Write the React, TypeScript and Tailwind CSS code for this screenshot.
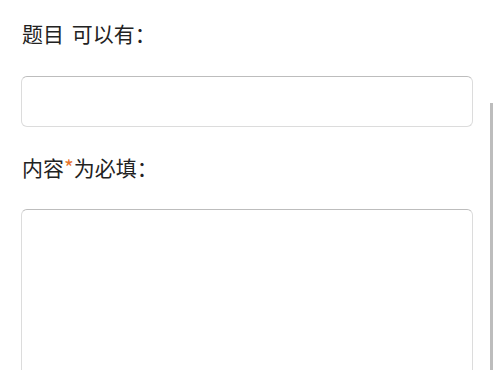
import React from "react";

export default function App() {
  return (
    <div
      className="relative h-[370px] w-[495px] overflow-hidden bg-white"
      style={{ fontFamily: '"Noto Sans CJK SC", "Noto Sans", sans-serif' }}
    >
      <div className="flex flex-col pl-[21px] pr-[22px] pt-[18px]">
        <label className="h-[30px] pl-[1px] text-[21px] leading-[30px] text-[#222] [word-spacing:3px]">题目 可以有：</label>
        <input
          type="text"
          className="mt-[28px] h-[51px] w-full rounded-[6px] border border-[#dcdcdc] border-t-[#bdbdbd] bg-white outline-none"
        />
        <label className="mt-[25px] h-[30px] pl-[1px] text-[21px] leading-[30px] text-[#222]">
          内容<span className="text-[#e8742c]">*</span>为必填：
        </label>
        <textarea className="mt-[27px] h-[200px] w-full resize-none rounded-[6px] border border-[#dcdcdc] border-t-[#bdbdbd] bg-white outline-none" />
      </div>
      <div className="absolute left-[490px] top-[103px] h-[267px] w-[3px] bg-[#bdbdbd]" />
    </div>
  );
}
